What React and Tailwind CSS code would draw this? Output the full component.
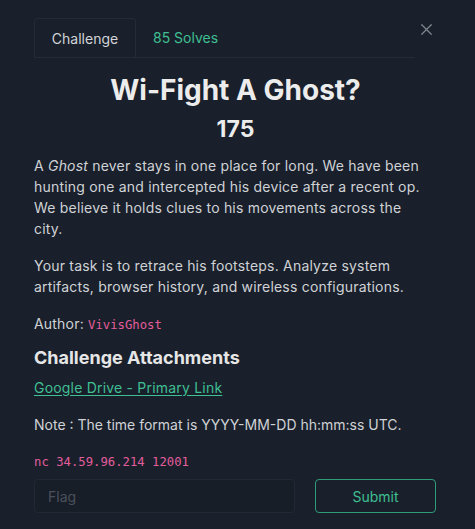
import { X } from "lucide-react";

function Tabs() {
  return (
    <div className="flex items-start">
      <div className="flex flex-1 border-b border-[#242b37]">
        <div className="flex h-[39px] w-[102px] items-center justify-center rounded-t-[4px] border border-b-0 border-[#242b37] text-[14px] text-[#d2d4d8]">
          Challenge
        </div>
        <div className="flex h-[39px] items-center px-[17px] text-[14px] text-[#3fbf92]">
          85 Solves
        </div>
      </div>
      <button className="flex h-[22px] w-[22px] items-center justify-center text-[#80858e]">
        <X size={19} strokeWidth={1.5} />
      </button>
    </div>
  );
}

export default function App() {
  return (
    <div
      className="min-h-[529px] w-full bg-[#19202b] pl-[34px] pr-[38px] pt-[18px] text-[#d0d2d6]"
      style={{ fontFamily: "Inter, 'Noto Sans', sans-serif" }}
    >
      <Tabs />

      <div className="mt-[15px] text-center">
        <h1 className="text-[28px] font-bold leading-[34px] text-[#ececec]">
          Wi-Fight A Ghost?
        </h1>
        <div className="mt-[7px] text-[23px] font-bold leading-[30px] text-[#ececec]">175</div>
      </div>

      <div className="mt-[11px] w-[397px] text-[14px] leading-[21px] tracking-[0.2px]">
        <p>
          A <em>Ghost</em> never stays in one place for long. We have been hunting one and
          intercepted his device after a recent op. We believe it holds clues to his
          movements across the city.
        </p>
        <p className="mt-[16px]">
          Your task is to retrace his footsteps. Analyze system artifacts, browser history,
          and wireless configurations.
        </p>
        <p className="mt-[16px]">
          Author:{" "}
          <code
            className="text-[12.25px] tracking-normal text-[#e35d9c]"
            style={{ fontFamily: "'DejaVu Sans Mono', monospace" }}
          >
            VivisGhost
          </code>
        </p>
      </div>

      <h2 className="mt-[8px] text-[18px] font-bold leading-[27px] text-[#e6e6e6]">
        Challenge Attachments
      </h2>
      <a
        href="#"
        className="mt-[6px] block w-fit text-[14px] leading-[21px] tracking-[0.2px] text-[#3fbf92] underline underline-offset-2"
      >
        Google Drive - Primary Link
      </a>

      <p className="mt-[16px] text-[14px] leading-[21px]">
        Note : The time format is YYYY-MM-DD hh:mm:ss UTC.
      </p>

      <p
        className="mt-[18px] text-[12.25px] leading-[18px] text-[#e35d9c]"
        style={{ fontFamily: "'DejaVu Sans Mono', monospace" }}
      >
        nc 34.59.96.214 12001
      </p>

      <div className="mt-[8px] flex items-center">
        <input
          placeholder="Flag"
          className="h-[34px] w-[261px] rounded-[4px] border border-[#222935] bg-[#181e28] px-[13px] text-[14px] text-[#d0d2d6] outline-none placeholder:text-[#4a515c]"
        />
        <button className="ml-[20px] h-[34px] w-[121px] rounded-[4px] border border-[#2f9c77] text-[14px] text-[#3fbf92]">
          Submit
        </button>
      </div>
    </div>
  );
}
